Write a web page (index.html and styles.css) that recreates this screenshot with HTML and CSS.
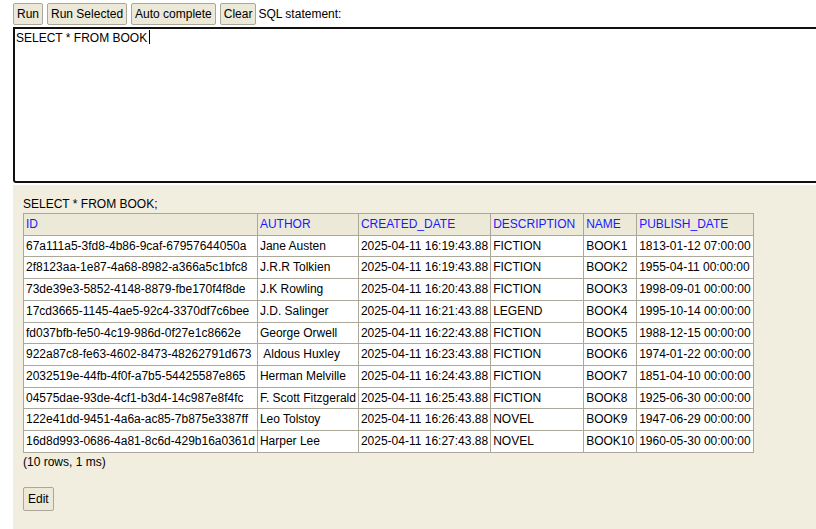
FILE: index.html
```html
<!DOCTYPE html>
<html>
<head>
<meta charset="utf-8">
<link rel="stylesheet" href="styles.css">
</head>
<body>
<div class="toolbar">
  <button class="btn">Run</button>
  <button class="btn">Run Selected</button>
  <button class="btn">Auto complete</button>
  <button class="btn">Clear</button>
  <span class="label">SQL statement:</span>
</div>
<div class="editor">SELECT * FROM BOOK<span class="caret"></span></div>
<div class="result">
  <div class="stmt">SELECT * FROM BOOK;</div>
  <table class="grid">
    <tr><th>ID</th><th>AUTHOR</th><th>CREATED_DATE</th><th class="desc">DESCRIPTION</th><th class="name">NAME</th><th>PUBLISH_DATE</th></tr>
    <tr><td>67a111a5-3fd8-4b86-9caf-67957644050a</td><td>Jane Austen</td><td>2025-04-11 16:19:43.88</td><td>FICTION</td><td>BOOK1</td><td>1813-01-12 07:00:00</td></tr>
    <tr><td>2f8123aa-1e87-4a68-8982-a366a5c1bfc8</td><td>J.R.R Tolkien</td><td>2025-04-11 16:19:43.88</td><td>FICTION</td><td>BOOK2</td><td>1955-04-11 00:00:00</td></tr>
    <tr><td>73de39e3-5852-4148-8879-fbe170f4f8de</td><td>J.K Rowling</td><td>2025-04-11 16:20:43.88</td><td>FICTION</td><td>BOOK3</td><td>1998-09-01 00:00:00</td></tr>
    <tr><td>17cd3665-1145-4ae5-92c4-3370df7c6bee</td><td>J.D. Salinger</td><td>2025-04-11 16:21:43.88</td><td>LEGEND</td><td>BOOK4</td><td>1995-10-14 00:00:00</td></tr>
    <tr><td>fd037bfb-fe50-4c19-986d-0f27e1c8662e</td><td>George Orwell</td><td>2025-04-11 16:22:43.88</td><td>FICTION</td><td>BOOK5</td><td>1988-12-15 00:00:00</td></tr>
    <tr><td>922a87c8-fe63-4602-8473-48262791d673</td><td>&nbsp;Aldous Huxley</td><td>2025-04-11 16:23:43.88</td><td>FICTION</td><td>BOOK6</td><td>1974-01-22 00:00:00</td></tr>
    <tr><td>2032519e-44fb-4f0f-a7b5-54425587e865</td><td>Herman Melville</td><td>2025-04-11 16:24:43.88</td><td>FICTION</td><td>BOOK7</td><td>1851-04-10 00:00:00</td></tr>
    <tr><td>04575dae-93de-4cf1-b3d4-14c987e8f4fc</td><td>F. Scott Fitzgerald</td><td>2025-04-11 16:25:43.88</td><td>FICTION</td><td>BOOK8</td><td>1925-06-30 00:00:00</td></tr>
    <tr><td>122e41dd-9451-4a6a-ac85-7b875e3387ff</td><td>Leo Tolstoy</td><td>2025-04-11 16:26:43.88</td><td>NOVEL</td><td>BOOK9</td><td>1947-06-29 00:00:00</td></tr>
    <tr><td>16d8d993-0686-4a81-8c6d-429b16a0361d</td><td>Harper Lee</td><td>2025-04-11 16:27:43.88</td><td>NOVEL</td><td>BOOK10</td><td>1960-05-30 00:00:00</td></tr>
  </table>
  <div class="count">(10 rows, 1 ms)</div>
  <button class="btn edit">Edit</button>
</div>
</body>
</html>
```
FILE: styles.css
```css
html, body {
  margin: 0;
  padding: 0;
  overflow: hidden;
  background: #fff;
  font-family: "Liberation Sans", Arial, sans-serif;
  font-size: 12px;
  color: #000;
}
.toolbar {
  display: flex;
  align-items: center;
  gap: 4px;
  padding: 3px 0 0 13px;
  height: 22px;
}
.btn {
  font-family: "Liberation Sans", Arial, sans-serif;
  font-size: 12px;
  color: #000;
  background: #ece9d8;
  border: 1px solid #aca899;
  border-radius: 2px;
  height: 22px;
  padding: 0 3px;
  margin: 0;
  line-height: 20px;
}
.label {
  margin-left: -2px;
}
.editor {
  margin: 2px 0 0 13px;
  width: 1000px;
  height: 150px;
  border: 2px solid #101010;
  border-bottom-left-radius: 3px;
  padding: 1px 1px;
  font-size: 12px;
  line-height: 16px;
  box-sizing: content-box;
}
.caret {
  display: inline-block;
  width: 1px;
  height: 14px;
  background: #000;
  vertical-align: -2px;
  margin-left: 2px;
}
.result {
  margin: 2px 0 0 13px;
  width: 1000px;
  height: 400px;
  background: #f1eee0;
  padding: 12px 10px 0 10px;
}
.stmt {
  line-height: 14px;
  margin-bottom: 2px;
}
.grid {
  border-collapse: collapse;
  background: #fff;
}
.grid th, .grid td {
  border: 1px solid #aca899;
  padding: 3px 2px 3px 2px;
  line-height: 14.7px;
  font-size: 12px;
  font-weight: normal;
  text-align: left;
  white-space: nowrap;
}
.grid th {
  background: #ece9d8;
  color: #1a1aff;
}
.grid th.desc {
  width: 88px;
}
.grid th.name {
  width: 48px;
}
.count {
  margin-top: 2px;
  line-height: 14px;
}
.edit {
  margin-top: 18px;
  height: 24px;
  padding: 0 4px;
  border-radius: 2px;
}
```
